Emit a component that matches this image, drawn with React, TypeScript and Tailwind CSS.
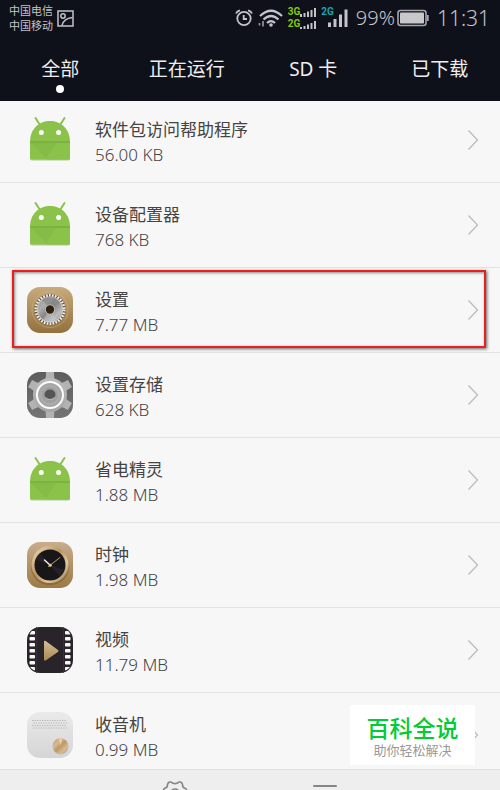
import { useState } from "react";
import type { ReactNode } from "react";

type AppEntry = {
  name: string;
  size: string;
  icon: ReactNode;
  highlighted?: boolean;
};

const TABS = ["全部", "正在运行", "SD 卡", "已下载"];

const AndroidIcon = () => (
  <svg viewBox="0 0 48 48" className="h-12 w-12 shrink-0">
    <path d="M9.5 2l4.500 7M38.500 2l-4.500 7" stroke="#8bc34a" strokeWidth="2" strokeLinecap="round" />
    <path d="M4 26v16.500q0 2 2 2h36q2 0 2-2V26z" fill="#6f9c3b" opacity=".5" />
    <path d="M4 26C4 13 13 5 24 5s20 8 20 21v15.500q0 2-2 2H6q-2 0-2-2z" fill="#8bc34a" />
    <path d="M4.500 27L21 43.500H44V27z" fill="#8ac24a" />
    <path d="M5 27l15 15 10-15z" fill="#7fb543" opacity=".5" />
    <path d="M4 26h40" stroke="#79ab40" strokeWidth="1.400" />
    <circle cx="15.300" cy="16.500" r="2.500" fill="#fff" />
    <circle cx="32.600" cy="16.500" r="2.500" fill="#fff" />
  </svg>
);

const SettingsIcon = () => (
  <svg viewBox="0 0 48 48" className="h-12 w-12 shrink-0">
    <defs>
      <linearGradient id="set-bg" x1="0" y1="0" x2="0" y2="1">
        <stop offset="0" stopColor="#c8aa7c" />
        <stop offset="1" stopColor="#92713d" />
      </linearGradient>
      <linearGradient id="set-disc" x1="0" y1="0" x2="1" y2="1">
        <stop offset="0" stopColor="#8b8b8b" />
        <stop offset=".3" stopColor="#b0b0b0" />
        <stop offset=".5" stopColor="#858585" />
        <stop offset=".75" stopColor="#bcbcbc" />
        <stop offset="1" stopColor="#898989" />
      </linearGradient>
    </defs>
    <rect x="1" y="1" width="46" height="46" rx="13" fill="url(#set-bg)" />
    <circle cx="24" cy="23.500" r="18" fill="none" stroke="#d5b98e" strokeWidth=".8" opacity=".6" />
    <circle cx="24" cy="23.500" r="15.600" fill="#63533c" />
    <circle cx="24" cy="23.500" r="14.200" fill="none" stroke="#f3f0eb" strokeWidth="2.600" strokeDasharray="1.787 1.187" />
    <circle cx="24" cy="23.500" r="12.700" fill="url(#set-disc)" stroke="#ddd" strokeWidth=".8" />
    <path d="M24 23.500L16 13.500Q24 8 31 13z" fill="#777" opacity=".5" />
    <path d="M24 23.500L17 34Q24 38 31 34z" fill="#ccc" opacity=".4" />
    <circle cx="24" cy="23.500" r="5" fill="#c5c5c5" />
    <circle cx="24" cy="23.500" r="4.200" fill="#302212" />
  </svg>
);

const StorageIcon = () => (
  <svg viewBox="0 0 48 48" className="h-12 w-12 shrink-0">
    <defs>
      <linearGradient id="sto-bg" x1="0" y1="0" x2="0" y2="1">
        <stop offset="0" stopColor="#5d5d5d" />
        <stop offset="1" stopColor="#747474" />
      </linearGradient>
      <linearGradient id="sto-gear" gradientUnits="userSpaceOnUse" x1="0" y1="1" x2="0" y2="47">
        <stop offset="0" stopColor="#c0c0c0" />
        <stop offset="1" stopColor="#a2a2a2" />
      </linearGradient>
      <clipPath id="sto-clip">
        <rect x="1" y="1" width="46" height="46" rx="13" />
      </clipPath>
    </defs>
    <g clipPath="url(#sto-clip)">
      <rect x="1" y="1" width="46" height="46" fill="url(#sto-bg)" />
      <g fill="#b2b2b2">
        <path d="M18 10q1.500-1 1.800-4L20 1h8l.2 5q.3 3 1.800 4zM18 38q1.500 1 1.800 4l.2 5h8l.2-5q.3-3 1.800-4z" />
        <path d="M18 10q1.500-1 1.800-4L20 1h8l.2 5q.3 3 1.800 4zM18 38q1.500 1 1.800 4l.2 5h8l.2-5q.3-3 1.800-4z" transform="rotate(60 24 24)" />
        <path d="M18 10q1.500-1 1.800-4L20 1h8l.2 5q.3 3 1.800 4zM18 38q1.500 1 1.800 4l.2 5h8l.2-5q.3-3 1.800-4z" transform="rotate(-60 24 24)" />
      </g>
      <circle cx="24" cy="24" r="17" fill="url(#sto-gear)" />
      <circle cx="24" cy="24" r="13" fill="#a6a6a6" stroke="#fcfcfc" strokeWidth="2" />
      <circle cx="24" cy="24" r="9" fill="#a0a0a0" stroke="#b2b2b2" strokeWidth="1" />
      <ellipse cx="24" cy="23.500" rx="5.500" ry="4.900" fill="#555" />
      <path d="M19.500 26.500q4.500 4 9 0" stroke="#ccc" strokeWidth=".8" fill="none" />
    </g>
  </svg>
);

const ClockIcon = () => (
  <svg viewBox="0 0 48 48" className="h-12 w-12 shrink-0">
    <defs>
      <linearGradient id="clk-bg" x1="0" y1="0" x2="0" y2="1">
        <stop offset="0" stopColor="#c9ad8c" />
        <stop offset="1" stopColor="#9b7a45" />
      </linearGradient>
      <linearGradient id="clk-ring" x1="0" y1="0" x2="1" y2="1">
        <stop offset="0" stopColor="#f1dfc0" />
        <stop offset=".45" stopColor="#b8935f" />
        <stop offset=".7" stopColor="#e3c99f" />
        <stop offset="1" stopColor="#8c6b3b" />
      </linearGradient>
    </defs>
    <rect x="1" y="1" width="46" height="46" rx="13" fill="url(#clk-bg)" />
    <circle cx="24" cy="25" r="19.300" fill="#715329" opacity=".45" />
    <circle cx="24" cy="23.500" r="18.600" fill="url(#clk-ring)" />
    <circle cx="24" cy="24" r="15.500" fill="#191619" />
    <path d="M24 24L9.500 18.500A15.500 15.500 0 0 1 14 12z" fill="#38333a" opacity=".4" />
    <path d="M24 24L38.500 29A15.500 15.500 0 0 1 34 36z" fill="#38333a" opacity=".4" />
    <path d="M24.500 24.500L18.500 19" stroke="#eee" strokeWidth="1.400" strokeLinecap="round" />
    <path d="M22.500 25.500L34 16.500" stroke="#c7a874" strokeWidth=".9" strokeLinecap="round" />
    <circle cx="24.300" cy="24.300" r="1.500" fill="#e8c88e" />
  </svg>
);

const FILM_HOLES = [-1, 5, 11, 17, 23, 29, 35, 41];

const VideoIcon = () => (
  <svg viewBox="0 0 48 48" className="h-12 w-12 shrink-0">
    <defs>
      <linearGradient id="vid-play" x1="0" y1="0" x2="0" y2="1">
        <stop offset="0" stopColor="#d6bd94" />
        <stop offset="1" stopColor="#a98855" />
      </linearGradient>
      <clipPath id="vid-clip">
        <rect x="1.800" y="1.800" width="44.400" height="44.400" rx="12.500" />
      </clipPath>
    </defs>
    <rect x="1" y="1" width="46" height="46" rx="13" fill="#29242a" />
    <g clipPath="url(#vid-clip)" fill="#f5f5f5">
      {FILM_HOLES.map((y) => (
        <g key={y}>
          <rect x="3.500" y={y} width="5.500" height="3.500" rx=".8" />
          <rect x="39" y={y} width="5.500" height="3.500" rx=".8" />
        </g>
      ))}
    </g>
    <path d="M10.500 1v46M37.500 1v46" stroke="#39343a" strokeWidth=".8" />
    <path d="M18 16.500v19l14.500-9.500z" fill="#0e0b0f" />
    <path d="M18 16v17.500q0 2 1.700 1L32 26q1.200-1 0-2L19.700 15q-1.700-1-1.700 1z" fill="url(#vid-play)" />
  </svg>
);

const RadioIcon = () => (
  <svg viewBox="0 0 48 48" className="h-12 w-12 shrink-0">
    <defs>
      <linearGradient id="rad-bg" x1="0" y1="0" x2="0" y2="1">
        <stop offset="0" stopColor="#eaeaea" />
        <stop offset="1" stopColor="#d5d5d5" />
      </linearGradient>
      <linearGradient id="rad-knob" x1="0" y1="0" x2="1" y2="1">
        <stop offset="0" stopColor="#b8905d" />
        <stop offset=".3" stopColor="#dabb90" />
        <stop offset=".5" stopColor="#bd9766" />
        <stop offset=".75" stopColor="#d9bc92" />
        <stop offset="1" stopColor="#b28b58" />
      </linearGradient>
    </defs>
    <rect x="1" y="1" width="46" height="46" rx="13" fill="url(#rad-bg)" />
    <g stroke="#b4b4b4" strokeWidth="1.200" strokeDasharray="1.300 1.200">
      <path d="M6 9.500h35M7.200 12h35M6 14.500h35M7.200 17h35" />
    </g>
    <circle cx="34.500" cy="35.500" r="8" fill="#a8a19a" opacity=".5" />
    <circle cx="34.500" cy="35" r="7.700" fill="url(#rad-knob)" />
    <path d="M34.500 35l-2-7.500h4z" fill="#f2dfc0" opacity=".6" />
  </svg>
);

const APPS: AppEntry[] = [
  { name: "软件包访问帮助程序", size: "56.00 KB", icon: <AndroidIcon /> },
  { name: "设备配置器", size: "768 KB", icon: <AndroidIcon /> },
  { name: "设置", size: "7.77 MB", icon: <SettingsIcon />, highlighted: true },
  { name: "设置存储", size: "628 KB", icon: <StorageIcon /> },
  { name: "省电精灵", size: "1.88 MB", icon: <AndroidIcon /> },
  { name: "时钟", size: "1.98 MB", icon: <ClockIcon /> },
  { name: "视频", size: "11.79 MB", icon: <VideoIcon /> },
  { name: "收音机", size: "0.99 MB", icon: <RadioIcon /> },
];

const StatusBar = () => (
  <div className="flex h-9 items-center justify-between pl-[9px] pr-[10px] text-[#c3c4c8]">
    <div className="flex items-center gap-1">
      <div className="text-[11px] leading-[15px]">
        <p>中国电信</p>
        <p>中国移动</p>
      </div>
      <svg viewBox="0 0 17 17" className="h-[17px] w-[17px]" fill="none" stroke="currentColor" strokeWidth="1.500">
        <rect x="1" y="1" width="15" height="15" />
        <circle cx="6" cy="6" r="2.200" />
        <path d="M5 15.500Q6.500 8.500 15.500 7.500" />
      </svg>
    </div>
    <div className="flex items-center">
      <svg viewBox="0 0 18 18" className="mr-[5px] h-[18px] w-[18px]" fill="none" stroke="currentColor" strokeWidth="1.800">
        <circle cx="9" cy="9.500" r="6.700" />
        <path d="M8.700 6v4H12M1 4.500Q2 2 5 1.300M17 4.500Q16 2 13 1.300" />
      </svg>
      <svg viewBox="0 0 25 18" className="mr-[5px] h-[18px] w-[25px]" fill="none" stroke="currentColor" strokeWidth="2.200">
        <path d="M2 7Q13-3.500 24 7M5.500 10.500q7.500-7 15 0M9 14q4-3.800 8 0" />
        <circle cx="13" cy="16" r="1.800" fill="currentColor" stroke="none" />
        <path d="M1.500 14v2.500M5 12v5.500" stroke="#8b8d93" strokeWidth="1.800" />
      </svg>
      <div className="mr-[5px] font-['Roboto',sans-serif] text-[10px] font-bold leading-3 text-[#86c800]">
        <div className="flex items-center">
          <span>3G</span>
          <svg viewBox="0 0 16 9" className="h-[9px] w-4" fill="#c3c4c8">
            <path d="M0 6h2v3H0zM3.500 5h2v4h-2zM7 3.500h2V9H7zM10.500 2h2v7h-2zM14 0h2v9h-2z" />
          </svg>
        </div>
        <div className="flex items-center">
          <span>2G</span>
          <svg viewBox="0 0 16 9" className="h-[9px] w-4" fill="#c3c4c8">
            <path d="M0 7h2v2H0zM3.500 6h2v3h-2zM7 4.500h2V9H7zM10.500 3h2v6h-2zM14 1h2v8h-2z" />
          </svg>
        </div>
      </div>
      <div className="mr-2 flex">
        <span className="-mr-1.5 font-['Roboto',sans-serif] text-[10px] font-bold leading-3 text-[#12a5b5]">2G</span>
        <svg viewBox="0 0 20 24" className="h-6 w-5" fill="currentColor">
          <path d="M0 16.500h3v4.500H0zM5.500 13h3v8h-3zM11 8.500h3V21h-3zM16.500 3.500h3V21h-3z" />
        </svg>
      </div>
      <span className="text-[20px] font-light leading-6">99%</span>
      <svg viewBox="0 0 32 18" className="ml-0.5 mr-2 h-[18px] w-8">
        <rect x="1" y="1.500" width="28" height="15" rx="2.500" fill="none" stroke="#a5a6aa" strokeWidth="1.600" />
        <rect x="3" y="3.500" width="24" height="11" rx=".8" fill="#c8c8ca" />
        <path d="M30.800 6v6" stroke="#a5a6aa" strokeWidth="1.800" />
      </svg>
      <span className="text-[21px] font-light leading-6">11:31</span>
    </div>
  </div>
);

const AppRow = ({ app }: { app: AppEntry }) => (
  <li className="relative h-[85px] shrink-0 border-b border-[#e2e2e2]">
    <button type="button" className="flex h-full w-full items-center gap-[21px] pl-[26px] pr-[21px] text-left">
      {app.icon}
      <span className="flex-1 pt-1 text-[17px] leading-[25px]">
        <span className="block text-[#444]">{app.name}</span>
        <span className="block font-light text-[#444]">{app.size}</span>
      </span>
      <svg viewBox="0 0 12 22" className="h-[22px] w-3" fill="none" stroke="#bcbcbc" strokeWidth="1.300">
        <path d="M1.500 1.500L10.500 11L1.500 20.500" />
      </svg>
    </button>
    {app.highlighted && (
      <div className="pointer-events-none absolute bottom-1 left-3 right-[14px] top-0.5 border-2 border-[#e8201f] shadow-[1px_1px_3px_rgba(0,0,0,0.6),inset_1px_1px_3px_rgba(0,0,0,0.45)]" />
    )}
  </li>
);

const BottomBar = () => (
  <footer className="grid h-[21px] shrink-0 grid-cols-2 overflow-hidden border-t border-[#dedede] bg-[#eee] px-[20%] text-[#858585]">
    <button type="button" aria-label="设置" className="flex items-start justify-center pt-2.5">
      <svg viewBox="0 0 26 26" className="h-[26px] w-[26px] shrink-0" fill="none" stroke="currentColor" strokeWidth="1.600">
        <path d="M13 3.700Q15 3.500 16.500 2.300Q19.500 1 20.500 4.500Q20.500 7.500 22.500 8Q25.500 9 24 11.500Q22.500 13 24 14.500Q25.500 17 22.500 18Q20.500 18.500 20.500 21.500Q19.500 25 16.500 23.700Q13 21.500 9.500 23.700Q6.500 25 5.500 21.500Q5.500 18.500 3.500 18Q.5 17 2 14.500Q3.500 13 2 11.500Q.5 9 3.500 8Q5.500 7.500 5.500 4.500Q6.500 1 9.500 2.300Q11 3.500 13 3.700z" />
        <circle cx="13" cy="13" r="4" />
      </svg>
    </button>
    <button type="button" aria-label="菜单" className="flex items-start justify-center pt-[15px]">
      <span className="h-0.5 w-6 rounded-full bg-[#858585]" />
    </button>
  </footer>
);

export default function App() {
  const [activeTab, setActiveTab] = useState(TABS[0]);

  return (
    <div className="relative flex h-screen flex-col overflow-hidden bg-[#f7f7f7] font-['Noto_Sans','Noto_Sans_CJK_SC',sans-serif]">
      <header className="shrink-0 overflow-hidden bg-[#0f111a]">
        <StatusBar />
        <nav className="-mx-[3px] grid h-[65px] grid-cols-4">
          {TABS.map((tab) => (
            <button
              key={tab}
              type="button"
              onClick={() => setActiveTab(tab)}
              className="flex flex-col items-center pt-5 text-[19px] leading-[26px] text-[#eee]">
              {tab}
              {tab === activeTab && <span className="mt-[3px] h-2 w-2 rounded-full bg-white" />}
            </button>
          ))}
        </nav>
      </header>

      <main className="min-h-0 flex-1 overflow-hidden">
        <ul className="-mt-[3px] flex flex-col">
          {APPS.map((app) => (
            <AppRow key={app.name} app={app} />
          ))}
        </ul>
      </main>

      <BottomBar />

      <aside className="absolute bottom-[25px] right-[25px] flex h-[60px] w-[125px] flex-col items-center justify-center bg-white pt-1 font-['Liberation_Sans','Noto_Sans_CJK_SC',sans-serif]">
        <p className="text-[23px] font-medium leading-7 text-[#00cc33]">百科全说</p>
        <p className="text-[13px] leading-4 text-[#999]">助你轻松解决</p>
      </aside>
    </div>
  );
}
